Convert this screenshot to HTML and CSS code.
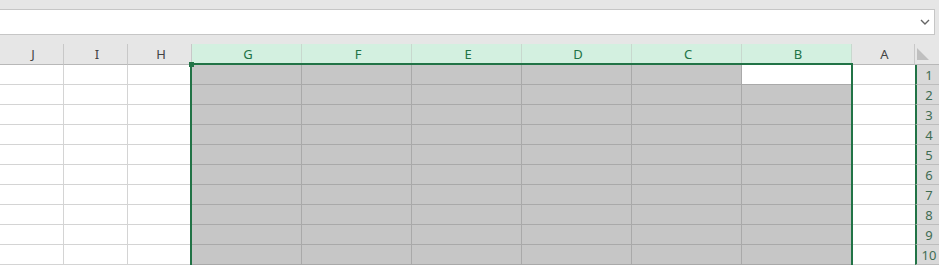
FILE: index.html
```html
<!DOCTYPE html>
<html>
  <head>
    <title>Sheet</title>
    <meta charset="UTF-8">
    <meta name="viewport" content="width=device-width, initial-scale=1.0">
    <link rel="stylesheet" href="styles.css">
  </head>
  <body>
    <div id="toolbar">
      <div id="formula">
        <svg class="chevron" width="10" height="6" viewBox="0 0 10 6"><path d="M1 1 L5 5 L9 1" fill="none" stroke="#666" stroke-width="1.4"/></svg>
      </div>
    </div>

    <div id="sheet">
      <div class="row head">
        <div class="ch">J</div>
        <div class="ch">I</div>
        <div class="ch">H</div>
        <div class="ch sel">G</div>
        <div class="ch sel">F</div>
        <div class="ch sel">E</div>
        <div class="ch sel">D</div>
        <div class="ch sel">C</div>
        <div class="ch sel">B</div>
        <div class="ch a">A</div>
        <div class="corner"><span class="tri"></span></div>
      </div>

      <div class="row">
        <div class="c"></div><div class="c"></div><div class="c"></div>
        <div class="c s"></div><div class="c s"></div><div class="c s"></div><div class="c s"></div><div class="c s"></div><div class="c s active"></div>
        <div class="c a"></div><div class="rh">1</div>
      </div>
      <div class="row">
        <div class="c"></div><div class="c"></div><div class="c"></div>
        <div class="c s"></div><div class="c s"></div><div class="c s"></div><div class="c s"></div><div class="c s"></div><div class="c s"></div>
        <div class="c a"></div><div class="rh">2</div>
      </div>
      <div class="row">
        <div class="c"></div><div class="c"></div><div class="c"></div>
        <div class="c s"></div><div class="c s"></div><div class="c s"></div><div class="c s"></div><div class="c s"></div><div class="c s"></div>
        <div class="c a"></div><div class="rh">3</div>
      </div>
      <div class="row">
        <div class="c"></div><div class="c"></div><div class="c"></div>
        <div class="c s"></div><div class="c s"></div><div class="c s"></div><div class="c s"></div><div class="c s"></div><div class="c s"></div>
        <div class="c a"></div><div class="rh">4</div>
      </div>
      <div class="row">
        <div class="c"></div><div class="c"></div><div class="c"></div>
        <div class="c s"></div><div class="c s"></div><div class="c s"></div><div class="c s"></div><div class="c s"></div><div class="c s"></div>
        <div class="c a"></div><div class="rh">5</div>
      </div>
      <div class="row">
        <div class="c"></div><div class="c"></div><div class="c"></div>
        <div class="c s"></div><div class="c s"></div><div class="c s"></div><div class="c s"></div><div class="c s"></div><div class="c s"></div>
        <div class="c a"></div><div class="rh">6</div>
      </div>
      <div class="row">
        <div class="c"></div><div class="c"></div><div class="c"></div>
        <div class="c s"></div><div class="c s"></div><div class="c s"></div><div class="c s"></div><div class="c s"></div><div class="c s"></div>
        <div class="c a"></div><div class="rh">7</div>
      </div>
      <div class="row">
        <div class="c"></div><div class="c"></div><div class="c"></div>
        <div class="c s"></div><div class="c s"></div><div class="c s"></div><div class="c s"></div><div class="c s"></div><div class="c s"></div>
        <div class="c a"></div><div class="rh">8</div>
      </div>
      <div class="row">
        <div class="c"></div><div class="c"></div><div class="c"></div>
        <div class="c s"></div><div class="c s"></div><div class="c s"></div><div class="c s"></div><div class="c s"></div><div class="c s"></div>
        <div class="c a"></div><div class="rh">9</div>
      </div>
      <div class="row">
        <div class="c"></div><div class="c"></div><div class="c"></div>
        <div class="c s"></div><div class="c s"></div><div class="c s"></div><div class="c s"></div><div class="c s"></div><div class="c s"></div>
        <div class="c a"></div><div class="rh">10</div>
      </div>

      <!-- selection outline G1:B10 -->
      <div id="selection"><span class="handle"></span></div>
    </div>
  </body>
</html>
```

FILE: styles.css
```css
* {
  box-sizing: border-box;
}

html, body {
  margin: 0;
  height: 100%;
  overflow: hidden;
  background-color: #e6e6e6;
  font-family: "Noto Sans", "Open Sans", sans-serif;
  font-size: 13px;
}

#toolbar {
  padding: 9px 4px 9px 0;
  height: 44px;
}

#formula {
  display: flex;
  align-items: center;
  justify-content: flex-end;
  height: 26px;
  margin-left: -1px;
  padding-right: 4px;
  background-color: white;
  border: 1px solid #c6c6c6;
}

#sheet {
  position: relative;
  width: 939px;
  overflow: hidden;
}

.row {
  display: grid;
  grid-template-columns: 64px 64px 64px repeat(6, 110px) 63px 25px;
  height: 20px;
  width: 940px;
}

.row.head {
  height: 21px;
}

.ch {
  display: flex;
  align-items: center;
  justify-content: center;
  padding: 0 0 1px 3px;
  color: #444;
  background-color: #e6e6e6;
  border-right: 1px solid #c8c8c8;
  border-bottom: 1px solid #b8b8b8;
}

.ch.sel {
  background-color: #d3f0e0;
  color: #217346;
  border-right-color: #c8d8ce;
}

.ch.a {
  border-right-color: #c8c8c8;
}

.corner {
  position: relative;
  background-color: #e6e6e6;
  border-bottom: 1px solid #b8b8b8;
}

.tri {
  position: absolute;
  left: 2px;
  top: 4px;
  width: 0;
  height: 0;
  border-left: 12px solid #bfbfbf;
  border-top: 12px solid transparent;
}

.c {
  background-color: white;
  border-right: 1px solid #d4d4d4;
  border-bottom: 1px solid #d4d4d4;
}

.c.s {
  background-color: #c6c6c6;
  border-right-color: #a9a9a9;
  border-bottom-color: #a9a9a9;
}

.c.s.active {
  background-color: white;
}

.c.a {
  border-right: none;
}

.rh {
  display: flex;
  align-items: center;
  justify-content: center;
  padding-left: 1px;
  color: #3f6d53;
  background-color: #d9d9d9;
  border-left: 2px solid #217346;
  border-bottom: 1px solid #bdbdbd;
}

#selection {
  position: absolute;
  left: 190px;
  top: 19px;
  width: 663px;
  height: 240px;
  border: 2px solid #217346;
  pointer-events: none;
}

.handle {
  position: absolute;
  left: -3px;
  top: -3px;
  width: 5px;
  height: 5px;
  background-color: #217346;
}
```
